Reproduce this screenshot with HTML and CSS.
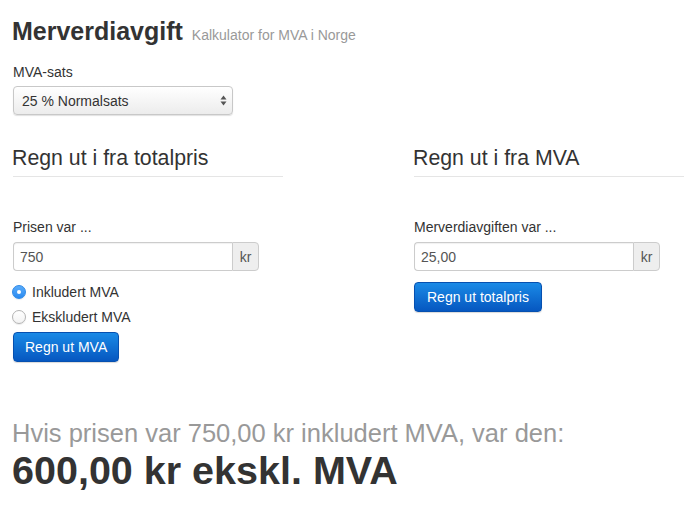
FILE: index.html
```html
<!DOCTYPE html>
<html lang="no">
<head>
<meta charset="utf-8">
<title>Merverdiavgift</title>
<link rel="stylesheet" href="styles.css">
</head>
<body>
<div class="page">
  <h1 class="title">Merverdiavgift <small class="subtitle">Kalkulator for MVA i Norge</small></h1>

  <label class="label label-sats" for="sats">MVA-sats</label>
  <div class="select-wrap">
    <select id="sats" class="select">
      <option>25 % Normalsats</option>
      <option>15 % Næringsmidler</option>
      <option>10 % Lav sats</option>
    </select>
    <svg class="select-arrows" width="7" height="11" viewBox="0 0 7 11" aria-hidden="true">
      <path d="M3.5 0.5 L6.5 4.5 L0.5 4.5 Z" fill="#555"/>
      <path d="M3.5 10.5 L6.5 6.5 L0.5 6.5 Z" fill="#555"/>
    </svg>
  </div>

  <div class="columns">
    <section class="col">
      <h3 class="col-title">Regn ut i fra totalpris</h3>
      <hr class="rule">
      <label class="label label-field" for="pris">Prisen var ...</label>
      <div class="input-group">
        <input id="pris" class="input" type="text" value="750">
        <span class="addon">kr</span>
      </div>
      <div class="radios">
        <label class="radio"><input type="radio" name="mva" checked><span>Inkludert MVA</span></label>
        <label class="radio"><input type="radio" name="mva"><span>Ekskludert MVA</span></label>
      </div>
      <button class="btn">Regn ut MVA</button>
    </section>
    <section class="col">
      <h3 class="col-title">Regn ut i fra MVA</h3>
      <hr class="rule">
      <label class="label label-field" for="mva">Merverdiavgiften var ...</label>
      <div class="input-group">
        <input id="mva" class="input" type="text" value="25,00">
        <span class="addon">kr</span>
      </div>
      <button class="btn btn-right">Regn ut totalpris</button>
    </section>
  </div>

  <div class="result">
    <p class="result-lead">Hvis prisen var 750,00 kr inkludert MVA, var den:</p>
    <p class="result-value">600,00 kr ekskl. MVA</p>
  </div>
</div>
</body>
</html>
```

FILE: styles.css
```css
* { box-sizing: border-box; }

html, body {
  margin: 0;
  padding: 0;
  background: #fff;
}

body {
  font-family: "Liberation Sans", Arial, Helvetica, sans-serif;
  font-size: 14px;
  line-height: 20px;
  color: #333;
}

.page {
  padding: 0 12px;
}

.title {
  margin: 16px 0 12px;
  font-size: 25px;
  line-height: 30px;
  font-weight: bold;
  color: #333;
}

.subtitle {
  font-size: 14px;
  font-weight: normal;
  color: #999;
  margin-left: 2px;
}

.label {
  display: block;
  font-weight: normal;
}

.label-sats {
  margin: 0 0 4px 1px;
}

.select-wrap {
  position: relative;
  width: 220px;
  margin-left: 1px;
}

.select {
  -webkit-appearance: none;
  appearance: none;
  display: block;
  width: 220px;
  height: 29px;
  padding: 0 8px;
  font-family: inherit;
  font-size: 14px;
  color: #333;
  border: 1px solid #c8c8c8;
  border-radius: 4px;
  background: linear-gradient(#ffffff, #ececec);
  box-shadow: 0 1px 1px rgba(0,0,0,0.12);
}

.select-arrows {
  position: absolute;
  right: 6px;
  top: 9px;
  pointer-events: none;
}

.columns {
  display: grid;
  grid-template-columns: 271px 271px;
  column-gap: 130px;
  margin-top: 31px;
}

.col-title {
  margin: 0 0 6px;
  font-size: 21.3px;
  line-height: 24px;
  font-weight: normal;
  color: #333;
}

.rule {
  margin: 0 0 0 1px;
  border: 0;
  border-top: 1px solid #e5e5e5;
  height: 0;
}

.label-field {
  margin: 40px 0 5px 1px;
}

.input-group {
  display: flex;
  width: 246px;
  height: 29px;
  margin-left: 1px;
}

.input {
  flex: 1;
  min-width: 0;
  height: 29px;
  padding: 0 6px;
  font-family: inherit;
  font-size: 14px;
  color: #555;
  border: 1px solid #ccc;
  border-right: 0;
  border-radius: 4px 0 0 4px;
  box-shadow: inset 0 1px 1px rgba(0,0,0,0.06);
  outline: none;
}

.addon {
  width: 27px;
  display: flex;
  align-items: center;
  justify-content: center;
  font-size: 14px;
  color: #555;
  background: #eee;
  border: 1px solid #ccc;
  border-radius: 0 4px 4px 0;
}

.radios {
  display: flex;
  flex-direction: column;
  gap: 5px;
  margin-top: 11px;
}

.radio {
  display: flex;
  align-items: center;
  height: 20px;
  gap: 6px;
}

.radio input {
  -webkit-appearance: none;
  appearance: none;
  margin: 0;
  width: 14px;
  height: 14px;
  border-radius: 50%;
  border: 1px solid #b3b3b3;
  background: linear-gradient(#fff, #f3f3f3);
  box-shadow: 0 1px 1px rgba(0,0,0,0.08);
  position: relative;
}

.radio input:checked {
  border-color: #2c88e6;
  background: linear-gradient(#5aacfb, #2a8af0);
}

.radio input:checked::after {
  content: "";
  position: absolute;
  left: 4px;
  top: 4px;
  width: 4px;
  height: 4px;
  border-radius: 50%;
  background: #fff;
}

.btn {
  display: block;
  margin-top: 5px;
  margin-left: 1px;
  height: 30px;
  padding: 0 11px;
  font-family: inherit;
  font-size: 14px;
  color: #fff;
  border: 1px solid #0650b0;
  border-radius: 4px;
  background: linear-gradient(#1a8ae6, #0657c0);
  box-shadow: 0 1px 1px rgba(0,0,0,0.15);
}

.btn-right {
  margin-top: 11px;
  padding: 0 12px;
}

.result {
  margin-top: 56px;
}

.result-lead {
  margin: 0;
  font-size: 25.5px;
  line-height: 30px;
  color: #999;
}

.result-value {
  margin: 0;
  font-size: 39.5px;
  line-height: 44px;
  font-weight: bold;
  color: #333;
}
```
